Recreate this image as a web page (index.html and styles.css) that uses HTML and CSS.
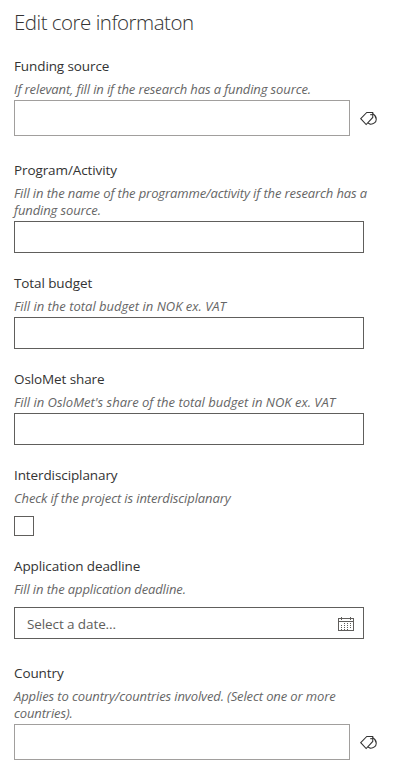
FILE: index.html
```html
<!DOCTYPE html>
<html lang="en">
<head>
    <meta charset="UTF-8">
    <meta name="viewport" content="width=device-width, initial-scale=1.0">
    <title>Edit core informaton</title>
    <link rel="stylesheet" href="styles.css">
</head>
<body>
    <svg class="sprite" aria-hidden="true">
        <symbol id="tag" viewBox="0 0 16 14">
            <path d="M0.7 7.2 L6.4 1.3 H12 V6 L5.8 12.7 Z"/>
            <path d="M9.6 3.4 H12"/>
            <path d="M12 2.6 C14 3.8 15.3 5.6 15.3 7.6 C15.3 10.6 12.6 12.6 9.6 12.3 L7.6 11.2"/>
        </symbol>
    </svg>

    <form class="panel">
        <h1>Edit core informaton</h1>

        <div class="field wide-gap">
            <label for="funding">Funding source</label>
            <p class="hint">If relevant, fill in if the research has a funding source.</p>
            <div class="picker">
                <input type="text" id="funding">
                <svg class="tag-icon"><use href="#tag"/></svg>
            </div>
        </div>

        <div class="field">
            <label for="program">Program/Activity</label>
            <p class="hint">Fill in the name of the programme/activity if the research has a<br>funding source.</p>
            <input type="text" id="program">
        </div>

        <div class="field amount">
            <label for="budget">Total budget</label>
            <p class="hint">Fill in the total budget in NOK ex. VAT</p>
            <input type="text" id="budget">
        </div>

        <div class="field amount">
            <label for="share">OsloMet share</label>
            <p class="hint">Fill in OsloMet's share of the total budget in NOK ex. VAT</p>
            <input type="text" id="share">
        </div>

        <div class="field spaced">
            <label for="interdisciplinary">Interdisciplanary</label>
            <p class="hint">Check if the project is interdisciplanary</p>
            <input type="checkbox" id="interdisciplinary">
        </div>

        <div class="field spaced wide-gap">
            <label for="deadline">Application deadline</label>
            <p class="hint">Fill in the application deadline.</p>
            <div class="date" id="deadline">
                <span>Select a date...</span>
                <svg class="calendar-icon" viewBox="0 0 16 16" shape-rendering="crispEdges">
                    <path d="M0.5 2.5 H15.5 V14.5 H0.5 Z M0.5 5.5 H15.5 M3.5 1 V4 M12.5 1 V4"/>
                    <path class="dots" d="M6 7.5 H14 M3 9.5 H14 M3 11.5 H14 M3 13.5 H11"/>
                </svg>
            </div>
        </div>

        <div class="field">
            <label for="country">Country</label>
            <p class="hint">Applies to country/countries involved. (Select one or more<br>countries).</p>
            <div class="picker">
                <input type="text" id="country">
                <svg class="tag-icon"><use href="#tag"/></svg>
            </div>
        </div>
    </form>
</body>
</html>
```
FILE: styles.css
```css
* {
    box-sizing: border-box;
}
body {
    margin: 0;
    background: #fff;
    color: #333;
    font-family: "Open Sans", "Noto Sans", sans-serif;
    font-size: 13.5px;
    letter-spacing: -0.1px;
}
.sprite {
    display: none;
}
.panel {
    width: 364px;
    padding: 7px 0 0 14px;
}
h1 {
    margin: 0 0 19px;
    font-size: 20.5px;
    font-weight: 300;
    letter-spacing: -0.5px;
    line-height: 30px;
    white-space: nowrap;
}
.field {
    display: flex;
    flex-direction: column;
    align-items: flex-start;
    margin-bottom: 20px;
}
.field.wide-gap {
    margin-bottom: 24px;
}
label {
    line-height: 20px;
}
.hint {
    margin: 5px 0 2px;
    color: #666;
    font-size: 13px;
    font-style: italic;
    letter-spacing: -0.12px;
    line-height: 17px;
    white-space: nowrap;
}
.amount .hint {
    letter-spacing: 0;
}
.spaced .hint {
    margin-bottom: 9px;
}
input[type="text"] {
    width: 350px;
    height: 32px;
    margin: 0;
    padding: 0 12px;
    border: 1px solid #605e5c;
    border-radius: 0;
    background: #fff;
    font: inherit;
}
.picker {
    display: flex;
    align-items: center;
    gap: 10px;
}
.picker input[type="text"] {
    width: 336px;
    height: 36px;
    border-color: #a19f9d;
}
.tag-icon {
    flex: none;
    width: 17px;
    height: 15px;
    fill: none;
    stroke: #333;
    stroke-width: 1;
}
input[type="checkbox"] {
    appearance: none;
    width: 20px;
    height: 20px;
    margin: 0;
    border: 1px solid #605e5c;
}
.date {
    display: flex;
    align-items: center;
    justify-content: space-between;
    width: 350px;
    height: 32px;
    padding: 1px 9px 0 12px;
    border: 1px solid #605e5c;
    color: #605e5c;
}
.calendar-icon {
    width: 16px;
    height: 16px;
    fill: none;
    stroke: #605e5c;
    stroke-width: 1;
}
.calendar-icon .dots {
    stroke-dasharray: 1 2;
}
```
